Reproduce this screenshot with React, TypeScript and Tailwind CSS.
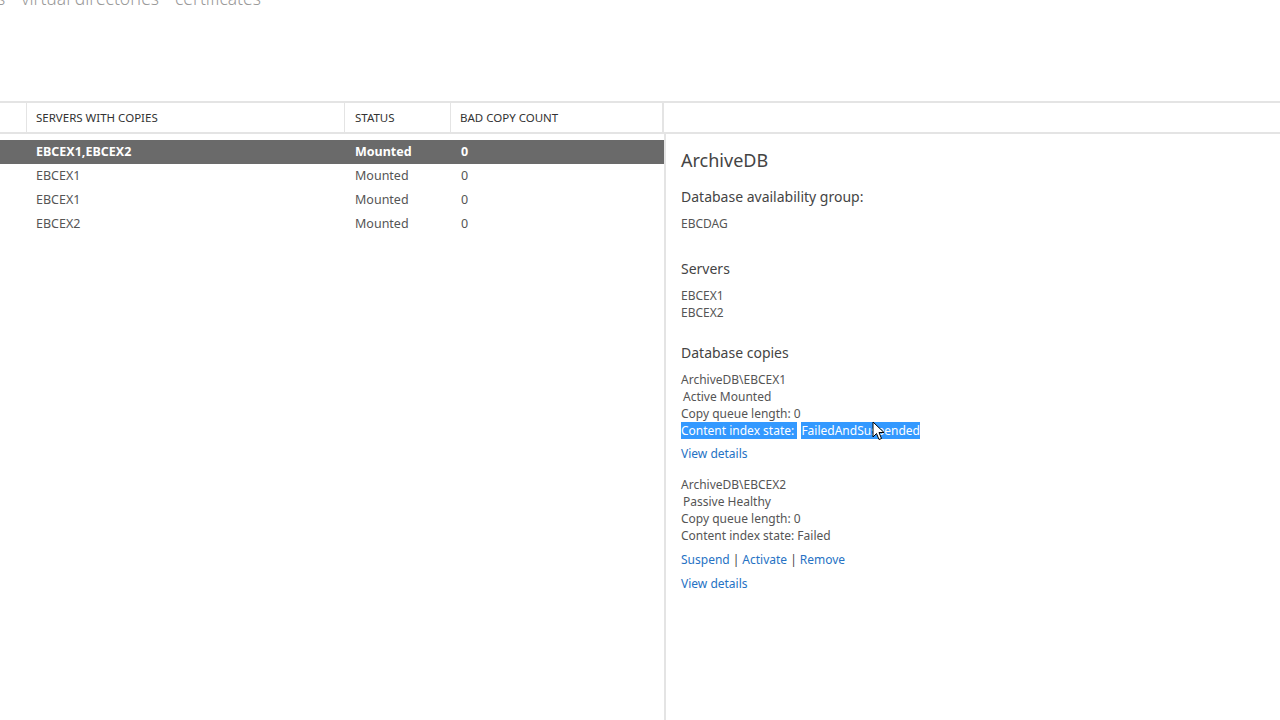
import React from "react";

const rows = [
  { s: "EBCEX1,EBCEX2", st: "Mounted", c: "0", sel: true },
  { s: "EBCEX1", st: "Mounted", c: "0" },
  { s: "EBCEX1", st: "Mounted", c: "0" },
  { s: "EBCEX2", st: "Mounted", c: "0" },
];

function Cursor() {
  return (
    <svg width="14" height="21" viewBox="0 0 14 21" className="absolute left-[872px] top-[421px]">
      <path d="M1 1 L1 16 L4.5 12.5 L7 18.5 L9.5 17.5 L7 11.5 L12 11.5 Z" fill="white" stroke="black" strokeWidth="1" strokeLinejoin="round" />
    </svg>
  );
}

export default function App() {
  return (
    <div
      className="relative w-[1280px] h-[720px] bg-white overflow-hidden flex flex-col text-[#444]"
      style={{ fontFamily: '"Noto Sans", "Open Sans", sans-serif' }}
    >
      <div className="h-[101px] shrink-0">
        <div className="-mt-[14px] flex text-[17.5px] font-light text-[#9a9a9a] leading-[24px]">
          <span className="-ml-[3px]">s</span>
          <span className="ml-[16px]">virtual directories</span>
          <span className="ml-[16px]">certificates</span>
        </div>
      </div>
      <div className="flex h-[33px] shrink-0 border-t-2 border-b-2 border-[#e4e4e4] text-[11.5px] text-[#333]">
        <div className="w-[27px] border-r border-[#e4e4e4]" />
        <div className="w-[318px] border-r border-[#e4e4e4] pl-[9px] flex items-center">SERVERS WITH COPIES</div>
        <div className="w-[106px] border-r border-[#e4e4e4] pl-[10px] flex items-center">STATUS</div>
        <div className="w-[213px] border-r-2 border-[#e4e4e4] pl-[9px] flex items-center">BAD COPY COUNT</div>
        <div className="flex-1" />
      </div>
      <div className="flex flex-1">
        <div className="w-[666px] border-r-2 border-[#e4e4e4] pt-[6px] text-[12.5px]">
          {rows.map((r, i) => (
            <div
              key={i}
              className={
                "flex h-[24px] items-center pt-[1px] " +
                (r.sel ? "bg-[#6a6a6a] text-white font-bold" : "text-[#555]")
              }
            >
              <div className="w-[27px]" />
              <div className="w-[318px] pl-[9px]">{r.s}</div>
              <div className="w-[106px] pl-[10px]">{r.st}</div>
              <div className="pl-[10px]">{r.c}</div>
            </div>
          ))}
        </div>
        <div className="flex-1 pl-[15px] pt-[14px] text-[12px] text-[#555]">
          <div className="text-[18px] leading-[24px] text-[#444]">ArchiveDB</div>
          <div className="mt-[15px] text-[14px] leading-[20px] text-[#444]">Database availability group:</div>
          <div className="mt-[8px] leading-[17px]">EBCDAG</div>
          <div className="mt-[27px] text-[14px] leading-[20px] text-[#444]">Servers</div>
          <div className="mt-[8px] leading-[17px]">EBCEX1</div>
          <div className="leading-[17px]">EBCEX2</div>
          <div className="mt-[22px] text-[14px] leading-[20px] text-[#444]">Database copies</div>
          <div className="mt-[8px] leading-[17px]">
            <div>ArchiveDB\EBCEX1</div>
            <div className="pl-[2px]">Active Mounted</div>
            <div>Copy queue length:&nbsp;0</div>
            <div className="flex">
              <span className="bg-[#3399ff] text-white">Content index state:&nbsp;</span>
              <span className="ml-[4px] bg-[#3399ff] text-white">FailedAndSuspended</span>
            </div>
          </div>
          <div className="mt-[6px] leading-[17px] text-[#2672c4]">View details</div>
          <div className="mt-[14px] leading-[17px]">
            <div>ArchiveDB\EBCEX2</div>
            <div className="pl-[2px]">Passive Healthy</div>
            <div>Copy queue length:&nbsp;0</div>
            <div>Content index state:&nbsp;Failed</div>
          </div>
          <div className="mt-[7px] leading-[17px] text-[#2672c4]">
            Suspend<span className="text-[#444] mx-[3px]">|</span>Activate<span className="text-[#444] mx-[3px]">|</span>Remove
          </div>
          <div className="mt-[7px] leading-[17px] text-[#2672c4]">View details</div>
        </div>
      </div>
      <Cursor />
    </div>
  );
}
